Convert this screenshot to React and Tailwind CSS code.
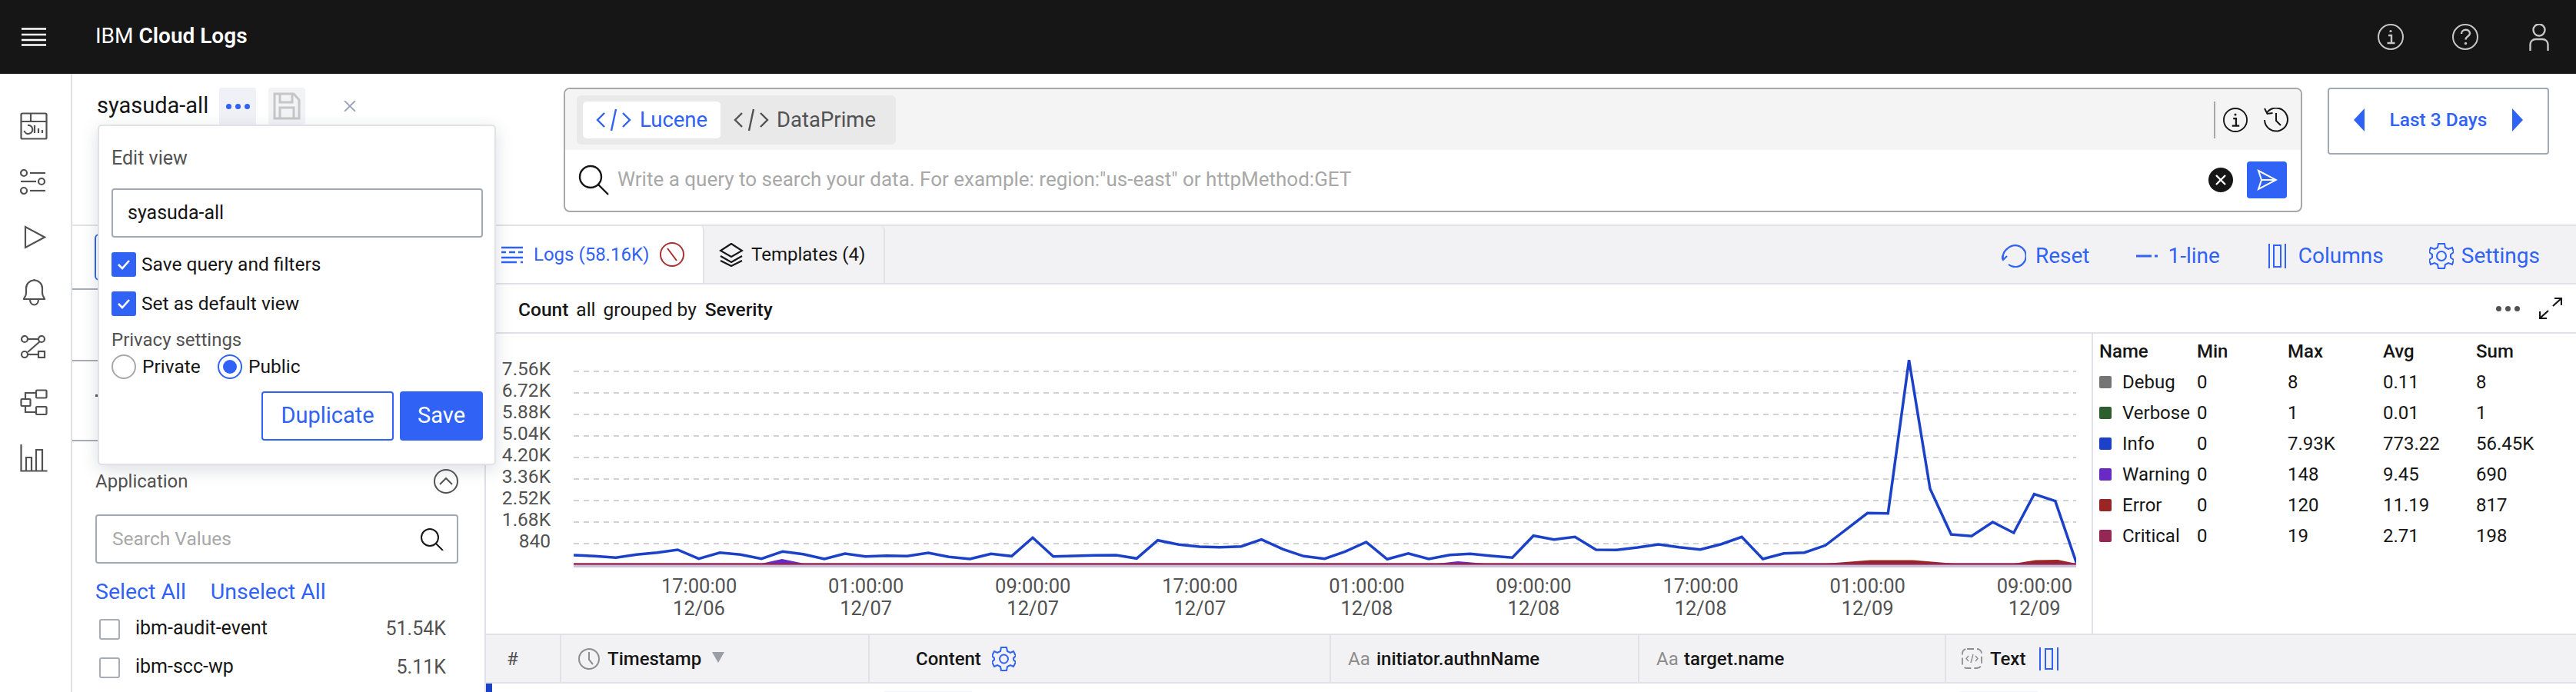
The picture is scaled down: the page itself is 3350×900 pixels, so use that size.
import React from "react";

const BLUE = "#2f62f5";
const S = ({ w, h, c = "currentColor", sw = 2.5, children, className = "" }) => (
  <svg width={w} height={h} viewBox={`0 0 ${w} ${h}`} fill="none" stroke={c} strokeWidth={sw} className={"shrink-0 " + className}>
    {children}
  </svg>
);

const z6 = [[182,876],[225,880],[268,886],[310,874],[352,866],[394,855],[437,890],[480,866],[522,874],[565,890],[608,862],[650,872],[693,891],[735,870],[777,881],[820,878],[862,880],[905,867],[947,883],[990,891],[1033,871],[1075,880],[1118,808],[1160,881],[1203,879],[1245,877],[1288,876],[1330,889],[1373,818],[1416,835],[1458,843],[1500,845],[1543,842]];
const z7 = [[15,815],[55,853],[93,880],[132,890],[170,862],[209,825],[248,892],[287,869],[325,891],[364,875],[402,871],[441,879],[480,886],[519,800],[557,815],[596,805],[635,855],[673,856],[712,846],[751,834],[789,845],[828,854],[867,833],[905,805],[944,891],[983,869],[1021,866],[1060,838],[1099,775],[1138,712],[1176,713],[1215,115],[1254,617],[1293,795],[1331,802],[1370,747],[1409,789],[1447,638],[1486,665],[1525,905]];
const fmt = (n) => n.toFixed(1);
const fy = (y) => 430 + y / 3 - 434;
const infoPts = [
  ...z6.map(([x, y]) => `${fmt(630 + x / 1.568 - 746)},${fmt(fy(y))}`),
  ...z7.map(([x, y]) => `${fmt(1630 + x / 1.425 - 746)},${fmt(fy(y))}`),
].join(" ");

const MenuIcon = () => (
  <S w={32} h={24} c="#fff" sw={2.5}>
    <path d="M0 1.500h32M0 9h32M0 16h32M0 22.500h32" />
  </S>
);
const CircleI = ({ size = 34, c = "#c6c6c6", sw = 2 }) => (
  <svg width={size} height={size} viewBox="0 0 34 34" fill="none" stroke={c} strokeWidth={sw} className="shrink-0">
    <circle cx="17" cy="17" r="16" />
    <path d="M14 15h4v9M12.500 25h10" strokeWidth="2.400" />
    <circle cx="17" cy="9.500" r="1.600" fill={c} stroke="none" />
  </svg>
);
const Help = () => (
  <S w={34} h={34} c="#c6c6c6" sw={2}>
    <circle cx="17" cy="17" r="16" />
    <path d="M12 13c0-7 11-7 11-.5 0 4-5.500 3.500-5.500 8" strokeWidth="2.400" />
    <circle cx="17.500" cy="25.500" r="1.700" fill="#c6c6c6" stroke="none" />
  </S>
);
const User = () => (
  <S w={26} h={35} c="#c6c6c6" sw={2.400}>
    <circle cx="13" cy="8" r="7.500" />
    <path d="M1.500 35v-8c0-4 3-7 7-7h9c4 0 7 3 7 7v8" />
  </S>
);

const Rail = () => (
  <div className="w-[94px] shrink-0 flex flex-col pl-[26px] pt-[50px] border-r-2 border-[#dfe1e6] text-[#525252]">
    <S w={36} h={36} sw={2.200}>
      <rect x="1.500" y="1.500" width="33" height="33" rx="1.500" />
      <path d="M1.500 12h33M14 1.500V12" />
      <path d="M10 17a5.500 5.500 0 1 1-4.500 7" />
      <path d="M19 17v10M24 21v6M29 23v4" />
    </S>
    <div className="mt-[38px]">
      <S w={34} h={33} sw={2.200}>
        <circle cx="5" cy="5" r="4" /><path d="M13 5h20" />
        <circle cx="28" cy="16" r="4" /><path d="M1 16h20" />
        <circle cx="5" cy="28" r="4" /><path d="M13 28h20" />
      </S>
    </div>
    <div className="mt-[40px] pl-[5px]">
      <S w={29} h={31} sw={2.200}><path d="M2 2v27l25-13.500z" /></S>
    </div>
    <div className="mt-[38px] pl-[2px]">
      <S w={33} h={36} sw={2.200}>
        <path d="M3 27c0-2 3-3 3-8v-6a10.500 10.500 0 0 1 21 0v6c0 5 3 6 3 8z" />
        <path d="M11 27c0 10 11 10 11 0M16.500 1v2" />
      </S>
    </div>
    <div className="mt-[38px]">
      <S w={34} h={30} sw={2.200}>
        <circle cx="6" cy="5" r="4" /><path d="M10 5h14" /><circle cx="28" cy="5" r="4" />
        <path d="M26 8L10 22" /><circle cx="6" cy="25" r="4" /><path d="M10 25h14" /><rect x="24" y="21" width="8" height="8" />
      </S>
    </div>
    <div className="mt-[40px]">
      <S w={36} h={35} sw={2.200}>
        <rect x="1.500" y="13" width="12" height="9" rx="1" />
        <rect x="21" y="1.500" width="13.500" height="10" rx="1" />
        <rect x="21" y="23" width="13.500" height="10" rx="1" />
        <path d="M7 13V5h14M7 22v8h14" />
      </S>
    </div>
    <div className="mt-[37px]">
      <S w={36} h={36} sw={2.200}>
        <path d="M1.500 0v34.500h34" />
        <path d="M8 34V17h7v17M21 34V7h8v27" />
      </S>
    </div>
  </div>
);

const Code = ({ c }) => (
  <S w={46} h={30} c={c} sw={2.400}>
    <path d="M11 6L2 15l9 9M35 6l9 9-9 9M26 1l-6 28" />
  </S>
);

const Chk = ({ label }) => (
  <div className="flex items-center h-[32px]">
    <span className="w-[32px] h-[32px] rounded-[3px] bg-[#2f62f5] flex items-center justify-center">
      <S w={18} h={14} c="#fff" sw={2.600}><path d="M2 7l5 5 9-10" /></S>
    </span>
    <span className="ml-[7px] text-[24.500px] text-[#161616]">{label}</span>
  </div>
);

const Popup = () => (
  <div className="absolute left-[33px] top-[66px] w-[518px] h-[443px] bg-white border-2 border-[#e0e2e8] rounded-[5px] shadow-[0_6px_22px_rgba(60,70,90,0.18)] px-[16px] pt-[27px] z-10">
    <div className="text-[25px] leading-[30px] text-[#525252]">Edit view</div>
    <div className="mt-[24px] w-[483px] h-[64px] border-2 border-[#a2a8b4] rounded-[4px] flex items-center pl-[19px] text-[25px]">syasuda-all</div>
    <div className="mt-[19px]"><Chk label="Save query and filters" /></div>
    <div className="mt-[19px]"><Chk label="Set as default view" /></div>
    <div className="mt-[16px] text-[24px] leading-[30px] text-[#525252]">Privacy settings</div>
    <div className="flex items-center h-[32px] mt-[4px] text-[24.500px]">
      <span className="w-[32px] h-[32px] rounded-full border-2 border-[#a8a8a8]" />
      <span className="ml-[8px] w-[98px]">Private</span>
      <span className="w-[32px] h-[32px] rounded-full border-2 border-[#2f62f5] flex items-center justify-center">
        <span className="w-[18px] h-[18px] rounded-full bg-[#2f62f5]" />
      </span>
      <span className="ml-[8px]">Public</span>
    </div>
    <div className="flex justify-end gap-[8px] mt-[16px] w-[483px]">
      <div className="w-[172px] h-[64px] border-2 border-[#2f62f5] rounded-[4px] flex items-center justify-center text-[29px] text-[#2f62f5]">Duplicate</div>
      <div className="w-[108px] h-[64px] bg-[#2f62f5] rounded-[4px] flex items-center justify-center text-[29px] text-white">Save</div>
    </div>
  </div>
);

const TopBar = () => (
  <div className="h-[198px] shrink-0 flex pt-[18px] border-b-2 border-[#e0e2e8]">
    <div className="w-[639px] shrink-0 flex items-start pl-[33px]">
      <div className="w-[158px] h-[48px] flex items-center text-[29px] -ml-[1px] mr-[1px]">syasuda-all</div>
      <div className="w-[48px] h-[48px] bg-[#eff1f6] rounded-t-[3px] flex items-center justify-center gap-[5px]">
        <span className="w-[7px] h-[7px] rounded-full bg-[#2f62f5]" />
        <span className="w-[7px] h-[7px] rounded-full bg-[#2f62f5]" />
        <span className="w-[7px] h-[7px] rounded-full bg-[#2f62f5]" />
      </div>
      <div className="ml-[16px] w-[48px] h-[48px] bg-[#f2f3f7] rounded-[4px] flex items-center justify-center">
        <S w={36} h={36} c="#c6c6c6" sw={3}>
          <path d="M2 2h25l7 8v24H2z" /><path d="M9 2v11h16V2M9 34V20h18v14" />
        </S>
      </div>
      <div className="ml-[50px] mt-[17px]">
        <S w={16} h={14} c="#98a2b8" sw={1.800}><path d="M1 0l14 14M15 0L1 14" /></S>
      </div>
    </div>
    <div className="w-[2261px] h-[162px] shrink-0 border-2 border-[#a8a8a8] rounded-[8px] overflow-hidden flex flex-col">
      <div className="h-[79px] shrink-0 bg-[#f4f4f4] flex items-center pl-[15px] pr-[16px]">
        <div className="w-[415px] h-[64px] rounded-[6px] bg-[#e9e9e9] flex items-center pl-[8px]">
          <div className="w-[179px] h-[48px] bg-white rounded-[5px] flex items-center pl-[17px] gap-[11px] text-[27.500px] text-[#2f62f5]">
            <Code c={BLUE} />Lucene
          </div>
          <div className="ml-[17px] flex items-center gap-[10px] text-[27.500px] text-[#525252]">
            <Code c="#525252" />DataPrime
          </div>
        </div>
        <div className="ml-auto w-[2px] h-[48px] bg-[#a8a8a8]" />
        <div className="ml-[10px]"><CircleI size={32} c="#161616" /></div>
        <div className="ml-[20px]">
          <S w={33} h={32} c="#161616" sw={2}>
            <path d="M5 6.500A15 15 0 1 1 2 16" /><path d="M2 1l3.500 7 7-1M17 7v10l6 6" />
          </S>
        </div>
      </div>
      <div className="flex-1 flex items-center pl-[17px] pr-[18px] -mt-[2px]">
        <S w={41} h={40} c="#161616" sw={2.400}>
          <circle cx="16" cy="16" r="14" /><path d="M26 26l13 13" />
        </S>
        <span className="ml-[10px] text-[26px] text-[#a8a8a8]">Write a query to search your data. For example: region:"us-east" or httpMethod:GET</span>
        <span className="ml-auto w-[32px] h-[32px] rounded-full bg-[#161616] flex items-center justify-center">
          <S w={14} h={14} c="#fff" sw={2.400}><path d="M1 1l12 12M13 1L1 13" /></S>
        </span>
        <span className="ml-[18px] w-[52px] h-[48px] bg-[#2f62f5] rounded-[4px] flex items-center justify-center">
          <S w={28} h={28} c="#fff" sw={2}><path d="M3 2l23 12L3 26l4-12zM7 14h19" /></S>
        </span>
      </div>
    </div>
    <div className="ml-[33px] w-[288px] h-[87px] border-2 border-[#a2a8b4] rounded-[4px] flex items-center justify-center gap-[33px] text-[#2f62f5] pb-[3px]">
      <S w={14} h={30} c="none"><path d="M14 0v30L0 15z" fill={BLUE} /></S>
      <span className="text-[24.500px] font-medium">Last 3 Days</span>
      <S w={14} h={30} c="none"><path d="M0 0v30l14-15z" fill={BLUE} /></S>
    </div>
  </div>
);

const Sidebar = () => (
  <div className="w-[538px] shrink-0 border-r-2 border-[#dfe1e6] flex flex-col">
    <div className="h-[83px] shrink-0 border-b-2 border-[#a8acb4] pl-[29px] pt-[10px]">
      <div className="w-[60px] h-[61px] border-2 border-[#2f62f5] rounded-[6px]" />
    </div>
    <div className="h-[93px] shrink-0 border-b-2 border-[#a8acb4]" />
    <div className="h-[104px] shrink-0 border-b-2 border-[#a8acb4] pl-[30px] pt-[43px]">
      <div className="w-[3px] h-[3px] bg-[#525252]" />
    </div>
    <div className="pl-[30px] pr-[34px] pt-[36px]">
      <div className="flex items-center justify-between h-[32px] text-[24px] text-[#525252]">
        Application
        <S w={32} h={32} c="#525252" sw={2}>
          <circle cx="16" cy="16" r="15" /><path d="M8 20l8-8 8 8" />
        </S>
      </div>
      <div className="mt-[27px] h-[64px] border-2 border-[#a2a8b4] rounded-[4px] flex items-center pl-[20px] pr-[17px] text-[24.500px] text-[#a8a8a8]">
        Search Values
        <span className="ml-auto">
          <S w={30} h={29} c="#161616" sw={2}><circle cx="12" cy="12" r="11" /><path d="M20 20l9 9" /></S>
        </span>
      </div>
      <div className="mt-[21px] flex gap-[32px] text-[28.500px] leading-[32px] text-[#2f62f5]">
        <span>Select All</span><span>Unselect All</span>
      </div>
      <div className="mt-[19px] flex items-center h-[26px] pl-[5px] pr-[16px] text-[25px]">
        <span className="w-[27px] h-[27px] border-2 border-[#a8acb4] rounded-[3px]" />
        <span className="ml-[20px] -mt-[3px]">ibm-audit-event</span>
        <span className="ml-auto text-[#525252]">51.54K</span>
      </div>
      <div className="mt-[24px] flex items-center h-[26px] pl-[5px] pr-[16px] text-[25px]">
        <span className="w-[27px] h-[27px] border-2 border-[#a8acb4] rounded-[3px]" />
        <span className="ml-[20px] -mt-[3px]">ibm-scc-wp</span>
        <span className="ml-auto text-[#525252]">5.11K</span>
      </div>
    </div>
  </div>
);

const TabsRow = () => (
  <div className="h-[76px] shrink-0 bg-[#f2f2f4] border-b-2 border-[#e0e2e8] flex text-[24px]">
    <div className="w-[284px] bg-white border-r-2 border-[#e0e2e8] rounded-tr-[5px] flex items-center pl-[20px] text-[#2f62f5]">
      <S w={28} h={23} c={BLUE} sw={2.400}>
        <path d="M0 2h28M0 8h6M10 8h8M22 8h6M0 15h28M0 21h20M25 21h3" />
      </S>
      <span className="ml-[14px]">Logs (58.16K)</span>
      <span className="ml-[14px]">
        <S w={32} h={32} c="#a83232" sw={2}><circle cx="16" cy="16" r="15" /><path d="M10 8l12 16" /></S>
      </span>
    </div>
    <div className="w-[235px] border-r-2 border-[#e0e2e8] rounded-tr-[5px] flex items-center pl-[19px]">
      <S w={32} h={31} c="#161616" sw={2.200}><path d="M16 1L2 10l14 8 14-8zM2 17l14 8 14-8M2 23l14 7 14-7" /></S>
      <span className="ml-[10px]">Templates (4)</span>
    </div>
    <div className="ml-auto flex items-center text-[#2f62f5] pr-[47px] text-[28px] pt-[3px]">
      <S w={32} h={30} c={BLUE} sw={2.200}><path d="M9 26A14 14 0 1 0 8 5a14 14 0 0 0-6 14M-1 14l3 6 5-5" /></S>
      <span className="ml-[12px]">Reset</span>
      <span className="ml-[61px]"><S w={28} h={4} c={BLUE} sw={3}><path d="M0 2h20M24 2h4" /></S></span>
      <span className="ml-[13px]">1-line</span>
      <span className="ml-[63px]"><S w={23} h={32} c={BLUE} sw={2}><path d="M1 0v32M22 0v32" /><rect x="7" y="2" width="9" height="28" /></S></span>
      <span className="ml-[16px]">Columns</span>
      <span className="ml-[59px]">
        <S w={32} h={34} c={BLUE} sw={2}>
          <circle cx="16" cy="17" r="6" />
          <path d="M12 1h8l1 5 4 2 5-2 2 6-4 3v4l4 3-2 6-5-2-4 2-1 5h-8l-1-5-4-2-5 2-2-6 4-3v-4l-4-3 2-6 5 2 4-2z" />
        </S>
      </span>
      <span className="ml-[10px]">Settings</span>
    </div>
  </div>
);

const ChartHead = () => (
  <div className="h-[64px] shrink-0 border-b-2 border-[#e0e2e8] flex items-center pl-[42px] pr-[18px] text-[24.500px] pt-[4px]">
    <span className="font-medium">Count</span>
    <span className="ml-[10px]">all</span>
    <span className="ml-[10px]">grouped by</span>
    <span className="ml-[11px] font-medium">Severity</span>
    <span className="ml-auto flex gap-[5px] -mt-[4px]">
      <span className="w-[7px] h-[7px] rounded-full bg-[#525252]" />
      <span className="w-[7px] h-[7px] rounded-full bg-[#525252]" />
      <span className="w-[7px] h-[7px] rounded-full bg-[#525252]" />
    </span>
    <span className="ml-[25px] -mt-[4px]">
      <S w={30} h={28} c="#161616" sw={2.200}><path d="M18 11L29 1M20 1h9v9M12 17L1 27M10 27H1v-9" /></S>
    </span>
  </div>
);

const yl = ["7.56K", "6.72K", "5.88K", "5.04K", "4.20K", "3.36K", "2.52K", "1.68K", "840"];
const xl = [["17:00:00","12/06"],["01:00:00","12/07"],["09:00:00","12/07"],["17:00:00","12/07"],["01:00:00","12/08"],["09:00:00","12/08"],["17:00:00","12/08"],["01:00:00","12/09"],["09:00:00","12/09"]];

const Chart = () => (
  <div className="w-[2088px] shrink-0 flex">
    <div className="w-[84px] shrink-0 pt-[32px] text-[24.500px] text-[#525252]">
      {yl.map((t) => <div key={t} className="h-[28px] leading-[28px] text-right">{t}</div>)}
    </div>
    <div className="ml-[30px] w-[1974px]">
      <svg width="1954" height="310" viewBox="0 0 1954 310" fill="none" className="block">
        {[49,77,105,133,161,189,217,245,273].map((y) => (
          <path key={y} d={`M0 ${y}H1954`} stroke="#d0d2d6" strokeWidth="2" strokeDasharray="7 6" />
        ))}
        <path d="M0 302.500H1954" stroke="#c9c2dd" strokeWidth="3" />
        <path d="M244 299L271 293L300 299zM1123 299L1150 296L1185 299z" fill="#6929c4" />
        <path d="M1628 299L1686 294.500L1742 294.500L1796 299zM1873 299L1901 294.500L1930 294L1954 299z" fill="#9a2525" />
        <polyline points={infoPts} stroke="#1a41c7" strokeWidth="3.500" strokeLinejoin="miter" />
        <path d="M0 299.500H1954" stroke="#962653" strokeWidth="2.500" />
      </svg>
      <div className="flex ml-[54.500px] mt-[4px] text-[25.500px] leading-[29px] text-[#525252]">
        {xl.map(([a, b], i) => (
          <div key={i} className="w-[217.100px] shrink-0 text-center">
            <div>{a}</div><div>{b}</div>
          </div>
        ))}
      </div>
    </div>
  </div>
);

const lg = [
  ["Debug","#757575","0","8","0.11","8"],
  ["Verbose","#2d5f2e","0","1","0.01","1"],
  ["Info","#1a41c7","0","7.93K","773.22","56.45K"],
  ["Warning","#6929c4","0","148","9.45","690"],
  ["Error","#9a2525","0","120","11.19","817"],
  ["Critical","#962653","0","19","2.71","198"],
];
const Legend = () => (
  <div className="flex-1 border-l-2 border-[#e0e2e8] pl-[8px] pt-[3px] text-[24px]">
    <div className="grid grid-cols-[127px_118px_124px_121px_1fr] auto-rows-[40px] items-center">
      {["Name","Min","Max","Avg","Sum"].map((t) => <div key={t} className="font-medium">{t}</div>)}
      {lg.map(([n, c, a, b, d, e]) => (
        <React.Fragment key={n}>
          <div className="flex items-center whitespace-nowrap">
            <span className="w-[16px] h-[16px] rounded-[2px] mr-[14px] shrink-0" style={{ backgroundColor: c }} />
            {n}
          </div>
          <div>{a}</div><div>{b}</div><div>{d}</div><div>{e}</div>
        </React.Fragment>
      ))}
    </div>
  </div>
);

const Aa = () => <span className="text-[24px] font-normal text-[#8d8d8d] w-[25px] shrink-0">Aa</span>;
const TableHead = () => (
  <div className="h-[65px] shrink-0 bg-[#f2f2f4] border-y-2 border-[#e0e2e8] flex text-[24px]">
    <div className="w-[98px] border-r-2 border-[#e0e2e8] flex items-center pl-[27px] text-[#525252]">#</div>
    <div className="w-[401px] border-r-2 border-[#e0e2e8] flex items-center pl-[22px] font-medium">
      <S w={28} h={28} c="#8d8d8d" sw={2}><circle cx="14" cy="14" r="13" /><path d="M14 5v10l5 6" /></S>
      <span className="ml-[10px]">Timestamp</span>
      <span className="ml-[14px] -mt-[4px]"><S w={16} h={14} c="none"><path d="M0 0h16L8 14z" fill="#9a9ea6" /></S></span>
    </div>
    <div className="w-[600px] border-r-2 border-[#e0e2e8] flex items-center pl-[60px] font-medium">
      Content
      <span className="ml-[14px]">
        <S w={31} h={32} c={BLUE} sw={2}>
          <circle cx="15.500" cy="16" r="5.500" />
          <path d="M12 1h7l1 5 4 2 4-2 3 6-3 3v2l3 3-3 6-4-2-4 2-1 5h-7l-1-5-4-2-4 2-3-6 3-3v-2l-3-3 3-6 4 2 4-2z" />
        </S>
      </span>
    </div>
    <div className="w-[401px] border-r-2 border-[#e0e2e8] flex items-center pl-[22px] font-medium gap-[12px] whitespace-nowrap"><Aa />initiator.authnName</div>
    <div className="w-[399px] border-r-2 border-[#e0e2e8] flex items-center pl-[22px] font-medium gap-[11px]"><Aa />target.name</div>
    <div className="flex-1 flex items-center pl-[20px] font-medium">
      <S w={27} h={27} c="#8d8d8d" sw={1.800}>
        <rect x="1" y="1" width="25" height="25" rx="6" strokeDasharray="9 4" />
        <path d="M9 10l-3 3.500 3 3.500M18 10l3 3.500-3 3.500M15 8l-3 11" strokeWidth="1.400" />
      </S>
      <span className="ml-[10px]">Text</span>
      <span className="ml-[18px]"><S w={25} h={30} c={BLUE} sw={2}><path d="M1 0v30M24 0v30" /><rect x="8" y="2" width="9" height="26" /></S></span>
    </div>
  </div>
);

export default function App() {
  return (
    <div className="w-[3350px] h-[900px] overflow-hidden flex flex-col bg-white text-[#161616] font-['Roboto','Liberation_Sans',sans-serif]">
      <header className="h-[96px] shrink-0 bg-[#161616] flex items-center pl-[28px] pr-[35px] text-white">
        <MenuIcon />
        <div className="ml-[64px] text-[28px] -mt-[3px]">IBM <span className="font-semibold">Cloud Logs</span></div>
        <div className="ml-auto"><CircleI /></div>
        <div className="ml-[63px]"><Help /></div>
        <div className="ml-[66px]"><User /></div>
      </header>
      <div className="flex-1 min-h-0 flex">
        <Rail />
        <main className="flex-1 min-w-0 relative flex flex-col">
          <TopBar />
          <div className="flex-1 min-h-0 flex">
            <Sidebar />
            <div className="flex-1 min-w-0 flex flex-col">
              <TabsRow />
              <ChartHead />
              <div className="h-[390px] shrink-0 flex"><Chart /><Legend /></div>
              <TableHead />
              <div className="flex h-[12px]">
                <div className="w-[8px] bg-[#1a41c7]" />
                <div className="ml-[510px] w-[114px] mt-[10px] bg-[#f0f3fb]" />
                <div className="ml-[1285px] w-[101px] mt-[10px] bg-[#f0f3fb]" />
              </div>
            </div>
          </div>
          <Popup />
        </main>
      </div>
    </div>
  );
}
